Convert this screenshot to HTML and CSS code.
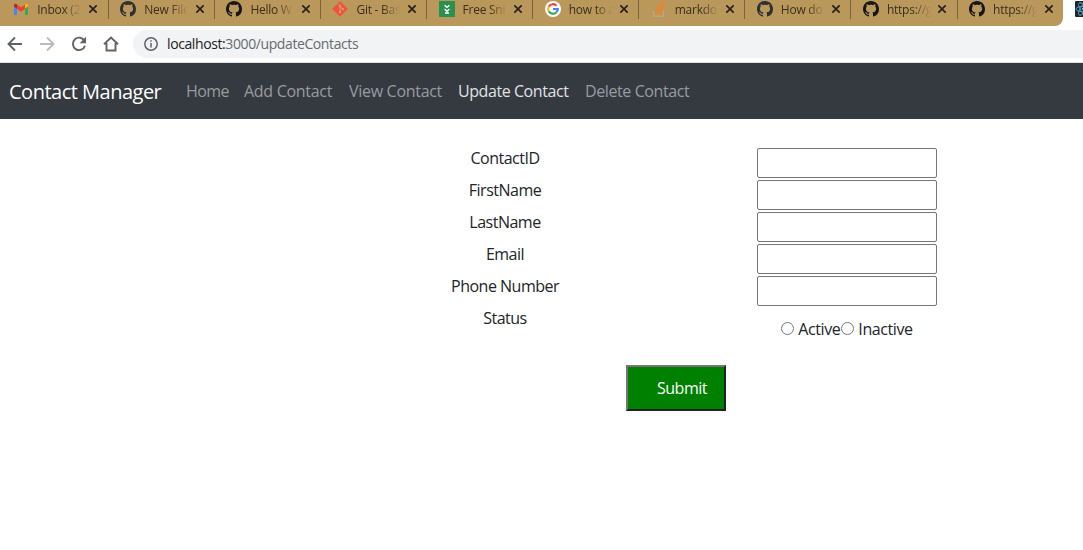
FILE: index.html
```
<!DOCTYPE html>
<html lang="en">
<head>
<meta charset="utf-8">
<title>Contact Manager</title>
<link rel="stylesheet" href="styles.css">
</head>
<body>
<svg class="defs" width="0" height="0">
  <symbol id="github" viewBox="0 0 16 16"><path d="M8 0C3.58 0 0 3.58 0 8c0 3.54 2.29 6.53 5.47 7.59.4.07.55-.17.55-.38 0-.19-.01-.82-.01-1.49-2.01.37-2.53-.49-2.69-.94-.09-.23-.48-.94-.82-1.13-.28-.15-.68-.52-.01-.53.63-.01 1.08.58 1.23.82.72 1.21 1.87.87 2.33.66.07-.52.28-.87.51-1.07-1.78-.2-3.64-.89-3.64-3.95 0-.87.31-1.59.82-2.15-.08-.2-.36-1.02.08-2.12 0 0 .67-.21 2.2.82.64-.18 1.32-.27 2-.27s1.36.09 2 .27c1.53-1.04 2.2-.82 2.2-.82.44 1.1.16 1.92.08 2.12.51.56.82 1.27.82 2.15 0 3.07-1.87 3.75-3.65 3.95.29.25.54.73.54 1.48 0 1.07-.01 1.93-.01 2.2 0 .21.15.46.55.38A8.01 8.01 0 0 0 16 8c0-4.42-3.58-8-8-8z"/></symbol>
  <symbol id="close" viewBox="0 0 8 8"><path d="M.3.3l7.4 7.4M7.7.3L.3 7.7" fill="none" stroke="#24221e" stroke-width="1.7"/></symbol>
</svg>
<header class="tabs">
  <div class="strip">
    <div class="tab"><svg class="fav" viewBox="0 0 16 16"><path fill="#4285f4" d="M1 4v9.2c0 .5.4.8.8.8H4V7z"/><path fill="#34a853" d="M12 7v7h2.200c.5 0 .8-.3.8-.8V4z"/><path fill="#ea4335" d="M4 3.500l4 3 4-3V7.800l-4 3-4-3z"/><path fill="#c5221f" d="M1 4.500C1 2.700 2.800 2.400 4 3.500v4.300L1 5.500z"/><path fill="#fbbc04" d="M15 4.500c0-1.800-1.800-2.100-3-1v4.300l3-2.300z"/></svg><span class="title">Inbox (2</span><svg class="x"><use href="#close"/></svg></div>
    <div class="tab"><svg class="fav gray"><use href="#github"/></svg><span class="title">New File</span><svg class="x"><use href="#close"/></svg></div>
    <div class="tab"><svg class="fav"><use href="#github"/></svg><span class="title">Hello W</span><svg class="x"><use href="#close"/></svg></div>
    <div class="tab"><svg class="fav" viewBox="0 0 16 16"><path fill="#f4513a" d="M8 .2L15.800 8 8 15.800.2 8z"/><path d="M5.800 2.800L8 5v6M8 5.500l2.700 2.600" stroke="#c9a177" fill="none"/><g fill="#c9a177"><circle cx="8" cy="5" r="1.200"/><circle cx="8" cy="11" r="1.200"/><circle cx="10.800" cy="8" r="1.200"/></g></svg><span class="title">Git - Bas</span><svg class="x"><use href="#close"/></svg></div>
    <div class="tab"><svg class="fav" viewBox="0 0 16 16"><path fill="#2b8f4e" d="M0 0h16v16H0z"/><path d="M5.600 4.200L8 6.400l2.400-2.200M5.600 8L8 10.200 10.400 8M6 12h4" stroke="#fff" stroke-width="1.400" fill="none"/></svg><span class="title">Free Sni</span><svg class="x"><use href="#close"/></svg></div>
    <div class="tab"><svg class="fav" viewBox="0 0 16 16"><circle cx="8" cy="8" r="8" fill="#fff"/><g fill="none" stroke-width="2.200"><path stroke="#ea4335" d="M11.500 4.700A4.800 4.800 0 0 0 3.800 5.700"/><path stroke="#fbbc05" d="M3.800 5.700a4.800 4.800 0 0 0 0 4.600"/><path stroke="#34a853" d="M3.800 10.300a4.800 4.800 0 0 0 7.400 1.200"/><path stroke="#4285f4" d="M11.200 11.500A4.800 4.800 0 0 0 12.800 8H8"/></g></svg><span class="title">how to a</span><svg class="x"><use href="#close"/></svg></div>
    <div class="tab"><svg class="fav" viewBox="0 0 16 16"><path d="M2.500 10v5.200h10V10" stroke="#b7aa93" stroke-width="1.200" fill="none"/><path d="M4.300 13h6.400M4.400 10.600l6.400.8M5 7.800l6.200 1.800M6.400 4.600l5.500 3.600M9 1.700l3.900 5.200M12 .3l1.100 5.800" stroke="#f48024" stroke-width="1.200" fill="none"/></svg><span class="title">markdo</span><svg class="x"><use href="#close"/></svg></div>
    <div class="tab"><svg class="fav gray"><use href="#github"/></svg><span class="title">How do</span><svg class="x"><use href="#close"/></svg></div>
    <div class="tab"><svg class="fav"><use href="#github"/></svg><span class="title">https://g</span><svg class="x"><use href="#close"/></svg></div>
    <div class="tab"><svg class="fav"><use href="#github"/></svg><span class="title">https://g</span><svg class="x"><use href="#close"/></svg></div>
  </div>
  <svg class="react" viewBox="0 0 16 16"><rect width="16" height="16" rx="1" fill="#20232a"/><g fill="none" stroke="#4fb3cf" stroke-width=".9"><ellipse cx="8" cy="8" rx="7" ry="2.700"/><ellipse cx="8" cy="8" rx="7" ry="2.700" transform="rotate(60 8 8)"/><ellipse cx="8" cy="8" rx="7" ry="2.700" transform="rotate(120 8 8)"/></g><circle cx="8" cy="8" r="1.300" fill="#4fb3cf"/></svg>
</header>
<div class="toolbar">
  <svg class="tool" viewBox="0 0 16 16"><path d="M15 8H2M8 1.500L1.500 8 8 14.500"/></svg>
  <svg class="tool off" viewBox="0 0 16 16"><path d="M1 8h13M8 1.500L14.500 8 8 14.500"/></svg>
  <svg class="tool" viewBox="0 0 16 16"><path d="M13.600 5A6.200 6.200 0 1 0 14 9.800"/><path d="M15 .8v6.400H8.600z" class="solid"/></svg>
  <svg class="tool" viewBox="0 0 16 16"><path d="M1 8.300L8 1.500l7 6.800M3.500 7v7.500h9V7"/></svg>
  <div class="address"><svg class="info" viewBox="0 0 14 14"><circle cx="7" cy="7" r="6.200"/><path d="M7 6v4.500M7 3.300v1.500"/></svg><span class="url"><b>localhost:</b>3000/updateContacts</span></div>
</div>
<nav class="navbar">
  <a class="brand">Contact Manager</a>
  <a class="link home">Home</a>
  <a class="link add">Add Contact</a>
  <a class="link view">View Contact</a>
  <a class="link update active">Update Contact</a>
  <a class="link delete">Delete Contact</a>
</nav>
<main>
  <form class="form">
    <div class="labels"><label>ContactID</label><label>FirstName</label><label>LastName</label><label>Email</label><label>Phone Number</label><label>Status</label></div>
    <div class="fields">
      <input type="text"><input type="text"><input type="text"><input type="text"><input type="text">
      <div class="status"><input type="radio" name="status"><span class="act">Active</span><input type="radio" name="status"><span class="inact">Inactive</span></div>
    </div>
  </form>
  <button class="submit">Submit</button>
</main>
</body>
</html>
```
FILE: styles.css
```
* { box-sizing: border-box; }
body { margin: 0; height: 550px; overflow: hidden; background: #fff; color: #212529; font: 16px/24px "Open Sans", "Noto Sans", sans-serif; }
.defs { display: block; }
.tabs { display: flex; height: 26px; overflow: hidden; }
.strip { display: flex; width: 1063px; height: 26px; padding-left: 2.700px; background: #ba985b; border-radius: 0 0 8px 0; flex: none; }
.tab { display: flex; align-items: center; width: 106.100px; height: 19px; padding-left: 10.500px; border-right: 1px solid #7b653e; flex: none; }
.tab + .tab { padding-left: 11.500px; }
.tab:last-child { border-right: 0; }
.fav { width: 16px; height: 16px; margin-top: -1px; fill: #15171a; flex: none; }
.gray { fill: #2b3137; }
.title { width: 44px; margin-left: 8px; white-space: nowrap; font-size: 12px; line-height: 18px; letter-spacing: -.25px; color: #3a2f1e; -webkit-mask-image: linear-gradient(90deg, #000 60%, transparent); mask-image: linear-gradient(90deg, #000 60%, transparent); }
.x { width: 8px; height: 8px; margin: -1px 0 0 7.500px; flex: none; }
.react { width: 16px; height: 16px; margin: 1px 0 0 12px; flex: none; }
.toolbar { display: flex; align-items: center; gap: 16px; height: 37px; padding-left: 7px; border-bottom: 1px solid #dee1e6; }
.tool { width: 16px; height: 16px; fill: none; stroke: #5f6368; stroke-width: 1.900; flex: none; }
.off { stroke: #b9bbbe; }
.solid { fill: #5f6368; stroke: none; }
.address { display: flex; align-items: center; gap: 9px; flex: 1; height: 28px; margin-left: -2px; padding-left: 11px; background: #f1f3f4; border-radius: 14px 0 0 14px; }
.info { width: 14px; height: 14px; fill: none; stroke: #5f6368; stroke-width: 1.500; }
.url { font-size: 14px; line-height: 20px; letter-spacing: -.4px; color: #686c70; }
.url b { font-weight: 400; color: #202124; }
.navbar { display: flex; align-items: center; height: 56px; padding-left: 9px; background: #343a40; white-space: nowrap; }
.brand { width: 177px; padding-top: 1px; font-size: 20px; letter-spacing: -.5px; color: #fff; }
.link { color: #999c9f; letter-spacing: -.3px; }
.home { width: 58px; letter-spacing: -.55px; }
.add { width: 105px; }
.view { width: 109px; }
.update { width: 127px; letter-spacing: -.43px; }
.delete { letter-spacing: -.4px; }
.active { color: #e1e2e3; }
main { display: flex; flex-direction: column; padding-top: 28px; }
.form { display: flex; padding-left: 334px; }
.labels { display: flex; flex-direction: column; width: 342px; margin-top: -1px; text-align: center; letter-spacing: -.5px; }
.labels label { height: 32px; line-height: 24px; }
.fields { display: flex; flex-direction: column; align-items: center; width: 342px; padding-top: 1px; gap: 2px; }
.fields input[type=text] { width: 180px; height: 30px; border: 1px solid #767676; border-radius: 2px; background: #fff; }
.status { display: flex; align-items: center; height: 24px; margin-top: 9px; letter-spacing: -.4px; }
.status input { width: 13px; height: 13px; margin: -1px 0 0; }
.status span { margin-left: 4px; }
.act { width: 43px; }
.submit { width: 100px; height: 46px; margin: 24px 0 0 626px; padding: 0 0 0 12px; border: 2px solid; border-color: #767676 #212121 #212121 #767676; background: #008000; color: #fff; font: 16px/24px "Open Sans", "Noto Sans", sans-serif; letter-spacing: -.45px; }
```
